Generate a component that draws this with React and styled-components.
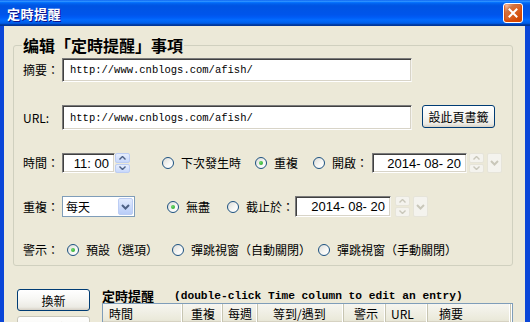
import React from 'react';
import styled, { createGlobalStyle } from 'styled-components';

const GlobalStyle = createGlobalStyle`
  html, body { margin: 0; padding: 0; background: #ECE9D8; }
  body {
    font-family: "Noto Sans CJK TC", "Liberation Sans", sans-serif;
    font-size: 12px;
    color: #000;
  }
  * { box-sizing: border-box; }
`;

const CJK = `"Noto Sans CJK TC", "Liberation Sans", sans-serif`;

const Window = styled.div`
  width: 530px;
  height: 322px;
  overflow: hidden;
  display: flex;
  flex-direction: column;
  background: #ECE9D8;
`;

const TitleBar = styled.div`
  flex: none;
  height: 26px;
  display: flex;
  align-items: center;
  justify-content: space-between;
  padding: 0 7px;
  background: linear-gradient(180deg, #0058EE 0%, #3593FF 4%, #288EFF 6%, #127DFF 8%, #036FFC 10%, #0262EE 14%, #0057E5 20%, #0054E3 24%, #0055EB 56%, #005BF5 66%, #026AFE 76%, #0062EF 86%, #0052D6 92%, #0040AB 94%, #003092 100%);
`;

const TitleText = styled.span`
  color: #fff;
  font-family: ${CJK};
  font-weight: bold;
  font-size: 13px;
  letter-spacing: 0.5px;
  text-shadow: 1px 1px 0 #0F1089;
`;

const CloseButton = styled.div`
  width: 20px;
  height: 20px;
  margin-top: -1px;
  border: 1px solid #fff;
  border-radius: 3px;
  display: flex;
  align-items: center;
  justify-content: center;
  background: radial-gradient(circle at 90% 90%, #cc4600 0%, #dc6527 55%, #cd7546 70%, #ffccb2 90%, #fff 100%);
  box-shadow: inset 0 -1px 2px 1px #da4600;
`;

const Frame = styled.div`
  flex: 1;
  display: flex;
  flex-direction: column;
  border-left: 4px solid #0A46D8;
  border-right: 5px solid #0A46D8;
  background: #ECE9D8;
`;

const GroupBox = styled.fieldset`
  margin: 10px 0 0 9px;
  width: 500px;
  min-inline-size: 0;
  border: 1px solid #D0D0BF;
  border-radius: 3px;
  padding: 4px 0 5px 9px;
  display: flex;
  flex-direction: column;
  gap: 23px;
`;

const GroupTitle = styled.legend`
  font-family: ${CJK};
  font-weight: bold;
  font-size: 16px;
  line-height: 18px;
  padding: 0 1px;
  margin-left: -1px;
`;

const Row = styled.div`
  display: flex;
  align-items: ${p => p.$align || 'center'};
  height: ${p => p.$h}px;
`;

const Label = styled.span`
  flex: none;
  width: 39px;
  font-size: 12px;
  line-height: 14px;
`;

const Field = styled.div`
  flex: none;
  width: ${p => p.$w}px;
  height: ${p => p.$h}px;
  margin-left: ${p => p.$ml || 0}px;
  background: #fff;
  border: 1px solid;
  border-color: #7B7B7B #F4F3EE #FFFFFF #7B7B7B;
  box-shadow: inset 1px 1px 0 #404040, inset -1px -1px 0 #D8D4C8;
  display: flex;
  align-items: center;
  justify-content: ${p => (p.$right ? 'flex-end' : 'flex-start')};
  padding: ${p => (p.$right ? '0 5px 0 0' : '0 0 0 7px')};
  font-family: ${p => (p.$mono ? '"Liberation Mono", monospace' : '"Liberation Sans", sans-serif')};
  font-size: ${p => (p.$mono ? '10.5px' : '13px')};
  white-space: pre;
`;

const Button = styled.button`
  flex: none;
  width: 73px;
  height: ${p => p.$h || 23}px;
  margin-left: ${p => p.$ml || 0}px;
  padding: 0;
  border: 1px solid #003C74;
  border-radius: 3px;
  background: linear-gradient(180deg, #FFFFFF 0%, #F7F7F4 45%, #ECEBE4 85%, #D6D0C5 100%);
  font-family: ${CJK};
  font-size: 12px;
  color: ${p => (p.disabled ? '#ACA899' : '#000')};
  border-color: ${p => (p.disabled ? '#C9C7BA' : '#003C74')};
`;

const Spinner = styled.div`
  flex: none;
  width: 15px;
  height: ${p => p.$h}px;
  margin-left: ${p => p.$ml || 0}px;
  display: flex;
  flex-direction: column;
  gap: 1px;
`;

const SpinHalf = styled.div`
  flex: 1;
  border: 1px solid ${p => (p.$off ? '#E6E4D9' : '#BCCDF4')};
  border-radius: 2px;
  background: ${p => (p.$off ? '#F4F3EE' : 'linear-gradient(180deg, #E6EEFD 0%, #C8D8FB 100%)')};
  display: flex;
  align-items: center;
  justify-content: center;
`;

const DropButton = styled.div`
  flex: none;
  width: 15px;
  height: ${p => p.$h}px;
  margin-left: ${p => p.$ml || 0}px;
  border: 1px solid ${p => (p.$off ? '#E6E4D9' : '#BCCDF4')};
  border-radius: 2px;
  background: ${p => (p.$off ? '#F4F3EE' : 'linear-gradient(180deg, #E2EBFE 0%, #B9CDF8 100%)')};
  display: flex;
  align-items: center;
  justify-content: center;
`;

const Combo = styled.div`
  flex: none;
  width: 73px;
  height: 21px;
  border: 1px solid #7F9DB9;
  background: #fff;
  display: flex;
  align-items: center;
  justify-content: space-between;
  padding: 1px 1px 1px 3px;
  font-size: 12px;
`;

const RadioItem = styled.span`
  flex: none;
  display: inline-flex;
  align-items: center;
  gap: 7px;
  margin-left: ${p => p.$ml || 0}px;
  font-size: 12px;
  line-height: 14px;
`;

const RadioCircle = styled.span`
  flex: none;
  width: 12px;
  height: 12px;
  border-radius: 50%;
  border: 1px solid #1C5180;
  background: linear-gradient(135deg, #DCDCD7 0%, #F8F8F6 60%, #FFFFFF 100%);
  display: flex;
  align-items: center;
  justify-content: center;
`;

const RadioDot = styled.span`
  width: 4px;
  height: 4px;
  border-radius: 50%;
  background: radial-gradient(circle at 35% 35%, #6CD86C 0%, #21A121 100%);
`;

const Bottom = styled.div`
  display: flex;
  gap: 12px;
  margin-top: 22px;
  padding-left: 13px;
`;

const ButtonColumn = styled.div`
  display: flex;
  flex-direction: column;
  gap: 5px;
  padding-top: 1px;
`;

const ListPanel = styled.div`
  width: 411px;
  display: flex;
  flex-direction: column;
`;

const ListTitle = styled.div`
  height: 15px;
  display: flex;
  align-items: center;
  gap: 20px;
  white-space: pre;
`;

const ListName = styled.span`
  font-family: ${CJK};
  font-weight: bold;
  font-size: 13px;
`;

const ListHint = styled.span`
  font-family: "Liberation Mono", monospace;
  font-weight: bold;
  font-size: 11.2px;
`;

const Table = styled.div`
  border: 1px solid #7F9DB9;
  background: #fff;
  height: 40px;
`;

const HeaderRow = styled.div`
  display: flex;
  height: 19px;
`;

const HeaderCell = styled.div`
  flex: none;
  width: ${p => p.$w}px;
  padding-left: ${p => p.$pl}px;
  background: linear-gradient(180deg, #F6F5F0 0%, #EBEADB 80%, #E2DFCF 100%);
  border-right: 1px solid #C7C5B2;
  box-shadow: inset -1px 0 0 #fff, inset 0 -2px 0 #D6D2C2;
  display: flex;
  align-items: center;
  font-size: 12px;
  white-space: pre;
`;

const Chevron = ({ up, off }) => (
  <svg width="7" height="4" viewBox="0 0 7 4">
    <path
      d={up ? 'M0.5 3.5 L3.5 0.5 L6.5 3.5' : 'M0.5 0.5 L3.5 3.5 L6.5 0.5'}
      fill="none"
      stroke={off ? '#C9C7BA' : '#4D6185'}
      strokeWidth="1.4"
    />
  </svg>
);

const DownArrow = ({ off }) => (
  <svg width="9" height="6" viewBox="0 0 9 6">
    <path d="M1 1 L4.5 4.5 L8 1" fill="none" stroke={off ? '#C9C7BA' : '#4D6185'} strokeWidth="2" />
  </svg>
);

const Spin = ({ h, ml, off }) => (
  <Spinner $h={h} $ml={ml}>
    <SpinHalf $off={off}><Chevron up off={off} /></SpinHalf>
    <SpinHalf $off={off}><Chevron off={off} /></SpinHalf>
  </Spinner>
);

const Radio = ({ checked, ml, children }) => (
  <RadioItem $ml={ml}>
    <RadioCircle>{checked && <RadioDot />}</RadioCircle>
    {children}
  </RadioItem>
);

const columns = [
  { t: '時間', w: 80, pl: 6 },
  { t: '重複', w: 40, pl: 8 },
  { t: '每週', w: 35, pl: 5 },
  { t: '等到/遇到', w: 86, pl: 15 },
  { t: '警示', w: 42, pl: 10 },
  { t: 'URL', w: 42, pl: 5 },
  { t: '摘要', w: 83, pl: 11 },
];

export default function App() {
  return (
    <>
      <GlobalStyle />
      <Window>
        <TitleBar>
          <TitleText>定時提醒</TitleText>
          <CloseButton>
            <svg width="10" height="10" viewBox="0 0 10 10">
              <path d="M1.5 1.5 L8.5 8.5 M8.5 1.5 L1.5 8.5" stroke="#fff" strokeWidth="2" strokeLinecap="square" />
            </svg>
          </CloseButton>
        </TitleBar>
        <Frame>
          <GroupBox>
            <GroupTitle>编辑「定時提醒」事項</GroupTitle>
            <Row $h={24}>
              <Label>摘要：</Label>
              <Field $w={350} $h={24} $mono>http://www.cnblogs.com/afish/</Field>
            </Row>
            <Row $h={25} $align="flex-start">
              <Label style={{ alignSelf: 'center' }}>URL:</Label>
              <Field $w={350} $h={25} $mono>http://www.cnblogs.com/afish/</Field>
              <Button $ml={10}>設此頁書籤</Button>
            </Row>
            <Row $h={20}>
              <Label>時間：</Label>
              <Field $w={53} $h={20} $right>11: 00</Field>
              <Spin h={20} />
              <Radio ml={32}>下次發生時</Radio>
              <Radio ml={14} checked>重複</Radio>
              <Radio ml={15}>開啟：</Radio>
              <Field $w={95} $h={20} $ml={4} $right>2014- 08- 20</Field>
              <Spin h={20} ml={2} off />
              <DropButton $h={20} $ml={3} $off><DownArrow off /></DropButton>
            </Row>
            <Row $h={21}>
              <Label>重複：</Label>
              <Combo>
                每天
                <DropButton $h={17}><DownArrow /></DropButton>
              </Combo>
              <Radio ml={32} checked>無盡</Radio>
              <Radio ml={17}>截止於：</Radio>
              <Field $w={96} $h={21} $ml={1} $right>2014- 08- 20</Field>
              <Spin h={21} ml={4} off />
              <DropButton $h={21} $ml={3} $off><DownArrow off /></DropButton>
            </Row>
            <Row $h={20}>
              <Label>警示：</Label>
              <Radio ml={5} checked>預設（選項）</Radio>
              <Radio ml={14}>彈跳視窗（自動關閉）</Radio>
              <Radio ml={7}>彈跳視窗（手動關閉）</Radio>
            </Row>
          </GroupBox>
          <Bottom>
            <ButtonColumn>
              <Button $h={22}>換新</Button>
              <Button $h={22} disabled>刪除</Button>
            </ButtonColumn>
            <ListPanel>
              <ListTitle>
                <ListName>定時提醒</ListName>
                <ListHint>(double-click Time column to edit an entry)</ListHint>
              </ListTitle>
              <Table>
                <HeaderRow>
                  {columns.map(c => (
                    <HeaderCell key={c.t} $w={c.w} $pl={c.pl}>{c.t}</HeaderCell>
                  ))}
                </HeaderRow>
              </Table>
            </ListPanel>
          </Bottom>
        </Frame>
      </Window>
    </>
  );
}
